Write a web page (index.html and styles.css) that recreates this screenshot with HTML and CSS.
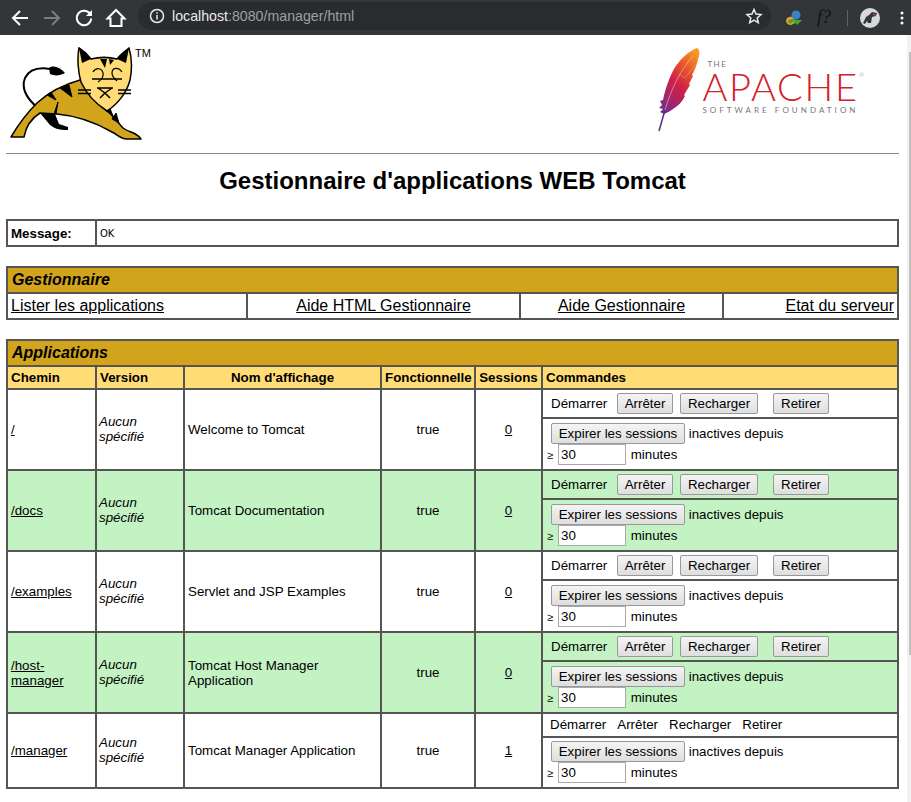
FILE: index.html
```html
<!DOCTYPE html>
<html lang="fr">
<head>
<meta charset="utf-8">
<title>/manager</title>
<link rel="stylesheet" href="styles.css">
</head>
<body>
<header class="chrome">
  <svg class="nav" width="24" height="24" viewBox="0 0 24 24"><path d="M20 12H5M12 5l-7 7 7 7" fill="none" stroke="#fff" stroke-width="2"/></svg>
  <svg class="nav" width="24" height="24" viewBox="0 0 24 24"><path d="M4 12h15M12 5l7 7-7 7" fill="none" stroke="#7b7e80" stroke-width="2"/></svg>
  <svg class="nav" width="24" height="24" viewBox="0 0 24 24"><path d="M18 8a7.200 7.200 0 1 0 1.200 4.500" fill="none" stroke="#fff" stroke-width="2"/><path d="M20 4v6h-6z" fill="#fff"/></svg>
  <svg class="nav" width="24" height="24" viewBox="0 0 24 24"><path d="M12 4L3.500 12.500H6.500V20H17.500V12.500H20.500Z" fill="none" stroke="#fff" stroke-width="2"/></svg>
  <div class="omnibox">
    <svg width="16" height="16" viewBox="0 0 16 16"><circle cx="8" cy="8" r="6.500" fill="none" stroke="#e8eaed" stroke-width="1.500"/><path d="M8 7v4.500M8 4.200v1.500" stroke="#e8eaed" stroke-width="1.500"/></svg>
    <span class="url"><span class="host">localhost</span>:8080/manager/html</span>
    <svg class="star" width="18" height="18" viewBox="0 0 18 18"><path d="M9 2.500l2 4.600 5 .5-3.800 3.300 1.100 4.900L9 13.200l-4.300 2.600 1.100-4.900L2 7.600l5-.5z" fill="none" stroke="#e8eaed" stroke-width="1.500"/></svg>
  </div>
  <svg class="ext" width="18" height="18" viewBox="0 0 18 18"><path d="M1 12c0-4 4-5 8-4l1 6-4 2c-3 0-5-2-5-4z" fill="#e0a030"/><path d="M3 12c2-2 5-2 7-1l-3 3c-2 1-4 0-4-2z" fill="#50a030"/><circle cx="11" cy="6" r="4.500" fill="#3f7fc4"/><path d="M8 11h9l-5 5z" fill="#3fae2a"/></svg>
  <span class="fq">f?</span>
  <span class="sep"></span>
  <svg class="avatar" width="20" height="20" viewBox="0 0 20 20"><circle cx="10" cy="10" r="10" fill="#d8d8dc"/><path d="M3 15l3-6 3-2 3-3 5 1-1 3-4 1-1 6H8l-1-2-2 3z" fill="#33363e"/><path d="M13 5l3 1v2l-3-1z" fill="#a83a3a"/></svg>
  <svg class="kebab" width="4" height="16" viewBox="0 0 4 16"><circle cx="2" cy="3" r="1.500" fill="#fff"/><circle cx="2" cy="8" r="1.500" fill="#fff"/><circle cx="2" cy="13" r="1.500" fill="#fff"/></svg>
</header>
<div class="viewport">
<main class="page">
  <div class="logos">
    <div class="tomcat">
      <svg width="134" height="94" viewBox="10 47 134 94">
        <path d="M38 108C26 98 21 88 25 78C29 70 38 67 50 69" fill="none" stroke="#000" stroke-width="2"/>
        <path d="M49 68C53 65 60 67 65 73C60 76 54 76 50 74Z" fill="#000"/>
        <path d="M40 113L50 125C54 128 58 130 68 130L68 127L59 124L55 114Z" fill="#000"/>
        <path d="M11 137C18 125 28 112 37 103C48 93 62 85 80 80L107 110L123 128C128 132 138 133 141 139H127C120 139 118 135 112 132C98 124 80 116 57 114L40 113C32 118 26 126 24 137Z" fill="#d2a41c" stroke="#000" stroke-width="1.500" stroke-linejoin="round"/>
        <path d="M60 88L72 97L69 85ZM47 95L56 100L51 92ZM58 102L56 114L54 114ZM105 110L113 116L109 106ZM112 119L119 123L116 113Z" fill="#000" stroke="#000" stroke-width="1"/>
        <path d="M79 48C84 51 88 55 91 59C99 57 109 57 117 59C120 55 125 51 129 48C132 58 132 70 130 80C127 92 118 104 107 111C96 104 86 93 81 82C78 72 77 58 79 48Z" fill="#ffdc75" stroke="#000" stroke-width="1.500"/>
        <path d="M79 48C84 51 88 55 91 59L82 63ZM129 48C125 51 120 55 117 59L126 63ZM100 59L105 68L107 59ZM109 59L110 65L114 60Z" fill="#000"/>
        <path d="M93 72C96 67 102 68 103 73C104 77 101 80 98 82M122 72C118 66 112 68 112 73C112 77 115 79 117 81" fill="none" stroke="#000" stroke-width="1.200"/>
        <path d="M92 79H122M97 88H113M105 93L98 88M105 93L112 88M105 93L100 98M105 93L110 98" fill="none" stroke="#000" stroke-width="1.500"/>
        <path d="M78 90H91M78 93.500H91M118 90H131M118 93.500H131" fill="none" stroke="#000" stroke-width="1.500"/>
      </svg>
      <span class="tm">TM</span>
    </div>
    <div class="apache">
      <svg class="feather" width="44" height="84" viewBox="0 0 44 84">
        <defs><linearGradient id="feather" x1="0.800" y1="0" x2="0.200" y2="1"><stop offset="0" stop-color="#f69923"/><stop offset="0.250" stop-color="#ea5b2a"/><stop offset="0.550" stop-color="#cf2047"/><stop offset="0.800" stop-color="#a9236b"/><stop offset="1" stop-color="#6d3090"/></linearGradient></defs>
        <path d="M40 0C42 1 43 4 42 8C40 16 38 22 35 27L36 28L32 36L33 37L27 47L28 48C25 54 21 58 16 61C12 64 9 65 7 66L3 64L6 61L2 60L5 57L3 53L6 52C8 42 12 30 17 21C23 11 32 3 40 0Z" fill="url(#feather)"/>
        <path d="M2 83L8 62" fill="none" stroke="#5e2a82" stroke-width="1.500"/>
        <path d="M8 62C14 42 22 24 36 8" fill="none" stroke="#f7c8a8" stroke-width=".6"/>
        <path d="M22 26L28 30L41 14" fill="none" stroke="#f7b080" stroke-width=".5"/>
      </svg>
      <div class="wordmark">
        <span class="the">THE</span>
        <span class="name">APACHE<sup class="reg">®</sup></span>
        <span class="asf">SOFTWARE FOUNDATION</span>
      </div>
    </div>
  </div>
  <hr class="rule">
  <h1 class="title">Gestionnaire d'applications WEB Tomcat</h1>

  <table class="grid message">
    <colgroup><col class="c-msg"><col></colgroup>
    <tr><td class="label">Message:</td><td class="mono">OK</td></tr>
  </table>

  <table class="grid links">
    <colgroup><col class="l1"><col class="l2"><col class="l3"><col></colgroup>
    <tr><th class="section" colspan="4">Gestionnaire</th></tr>
    <tr>
      <td class="big"><a href="#">Lister les applications</a></td>
      <td class="big center"><a href="#">Aide HTML Gestionnaire</a></td>
      <td class="big center"><a href="#">Aide Gestionnaire</a></td>
      <td class="big right"><a href="#">Etat du serveur</a></td>
    </tr>
  </table>

  <table class="grid apps">
    <colgroup><col class="a1"><col class="a2"><col class="a3"><col class="a4"><col class="a5"><col></colgroup>
    <tr><th class="section" colspan="6">Applications</th></tr>
    <tr class="heads">
      <th>Chemin</th><th>Version</th><th class="center">Nom d'affichage</th><th class="center">Fonctionnelle</th><th class="center">Sessions</th><th>Commandes</th>
    </tr>

    <tr class="row">
      <td rowspan="2"><a href="#">/</a></td><td rowspan="2" class="ver">Aucun spécifié</td><td rowspan="2">Welcome to Tomcat</td><td rowspan="2" class="center">true</td><td rowspan="2" class="center"><a href="#">0</a></td>
      <td class="cmd"><span class="start">Démarrer</span><button class="b-stop">Arrêter</button><button class="b-reload">Recharger</button><button class="b-undeploy">Retirer</button></td>
    </tr>
    <tr class="row"><td class="exp"><div class="exp-1"><button class="b-expire">Expirer les sessions</button> inactives depuis</div><div class="exp-2"><span class="ge">≥</span><input class="mins" value="30"> minutes</div></td></tr>

    <tr class="row alt">
      <td rowspan="2"><a href="#">/docs</a></td><td rowspan="2" class="ver">Aucun spécifié</td><td rowspan="2">Tomcat Documentation</td><td rowspan="2" class="center">true</td><td rowspan="2" class="center"><a href="#">0</a></td>
      <td class="cmd"><span class="start">Démarrer</span><button class="b-stop">Arrêter</button><button class="b-reload">Recharger</button><button class="b-undeploy">Retirer</button></td>
    </tr>
    <tr class="row alt"><td class="exp"><div class="exp-1"><button class="b-expire">Expirer les sessions</button> inactives depuis</div><div class="exp-2"><span class="ge">≥</span><input class="mins" value="30"> minutes</div></td></tr>

    <tr class="row">
      <td rowspan="2"><a href="#">/examples</a></td><td rowspan="2" class="ver">Aucun spécifié</td><td rowspan="2">Servlet and JSP Examples</td><td rowspan="2" class="center">true</td><td rowspan="2" class="center"><a href="#">0</a></td>
      <td class="cmd"><span class="start">Démarrer</span><button class="b-stop">Arrêter</button><button class="b-reload">Recharger</button><button class="b-undeploy">Retirer</button></td>
    </tr>
    <tr class="row"><td class="exp"><div class="exp-1"><button class="b-expire">Expirer les sessions</button> inactives depuis</div><div class="exp-2"><span class="ge">≥</span><input class="mins" value="30"> minutes</div></td></tr>

    <tr class="row alt">
      <td rowspan="2"><a href="#">/host-manager</a></td><td rowspan="2" class="ver">Aucun spécifié</td><td rowspan="2">Tomcat Host Manager Application</td><td rowspan="2" class="center">true</td><td rowspan="2" class="center"><a href="#">0</a></td>
      <td class="cmd"><span class="start">Démarrer</span><button class="b-stop">Arrêter</button><button class="b-reload">Recharger</button><button class="b-undeploy">Retirer</button></td>
    </tr>
    <tr class="row alt"><td class="exp"><div class="exp-1"><button class="b-expire">Expirer les sessions</button> inactives depuis</div><div class="exp-2"><span class="ge">≥</span><input class="mins" value="30"> minutes</div></td></tr>

    <tr class="row last">
      <td rowspan="2"><a href="#">/manager</a></td><td rowspan="2" class="ver">Aucun spécifié</td><td rowspan="2">Tomcat Manager Application</td><td rowspan="2" class="center">true</td><td rowspan="2" class="center"><a href="#">1</a></td>
      <td class="cmd plain"><span>Démarrer</span><span>Arrêter</span><span>Recharger</span><span>Retirer</span></td>
    </tr>
    <tr class="row end"><td class="exp"><div class="exp-1"><button class="b-expire">Expirer les sessions</button> inactives depuis</div><div class="exp-2"><span class="ge">≥</span><input class="mins" value="30"> minutes</div></td></tr>
  </table>
</main>
<div class="scrollbar"><div class="thumb"></div></div>
</div>
</body>
</html>
```
FILE: styles.css
```css
* { box-sizing: border-box; }
html, body { margin: 0; height: 100%; overflow: hidden; }
body { font-family: "Liberation Sans", Arial, sans-serif; color: #000; background: #fff; }

.chrome { height: 35px; background: #323639; display: flex; align-items: center; padding-left: 8px; }
.nav { margin-right: 8px; flex: none; }
.omnibox { margin-left: 2px; width: 633px; height: 28px; border-radius: 14px; background: #292b2e; display: flex; align-items: center; padding-left: 11px; padding-right: 8px; margin-top: -3px; }
.url { margin-left: 7px; font-size: 14.2px; color: #9aa0a6; }
.host { color: #e8eaed; }
.star { margin-left: auto; }
.ext { margin-left: 14px; flex: none; }
.fq { margin-left: 14px; width: 18px; font: italic 18px "Liberation Serif", serif; color: #111; }
.sep { width: 1px; height: 16px; background: #5f6368; margin-left: 12px; }
.avatar { margin-left: 12px; }
.kebab { margin-left: 20px; }

.viewport { position: relative; height: 767px; overflow: hidden; }
.page { padding: 0 12px 0 6px; }
.scrollbar { position: absolute; top: 0; right: 0; bottom: 0; width: 4px; background: #f1f1f1; }
.thumb { width: 2px; height: 603px; margin: 17px 0 0 2px; background: #c1c1c1; }

.logos { height: 118px; display: flex; justify-content: space-between; }
.tomcat { display: flex; align-items: flex-start; padding: 12px 0 0 4px; }
.tm { font-size: 11px; line-height: 11px; margin: 1px 0 0 -9px; }
.apache { display: flex; align-items: flex-start; padding: 13px 35px 0 0; }
.feather { flex: none; }
.wordmark { display: flex; flex-direction: column; margin-left: 1px; margin-top: 11px; color: #d22128; }
.the { font: 400 8px/10px Lato, sans-serif; letter-spacing: 1.500px; color: #777; margin-left: 5px; }
.name { font: 300 38px/32px Lato, sans-serif; letter-spacing: 1.800px; margin-top: 1px; white-space: nowrap; }
.reg { font-size: 6px; color: #777; vertical-align: 24px; line-height: 0; letter-spacing: 0; }
.asf { font: 400 8px/10px Lato, sans-serif; letter-spacing: 3.050px; color: #777; margin-top: 3px; white-space: nowrap; }

.rule { margin: 0; border: 0; border-top: 1px solid #888; height: 1px; }
.title { margin: 13px 0 24px; font-size: 24px; line-height: 28px; text-align: center; font-weight: 700; }

.grid { width: 893px; table-layout: fixed; border-collapse: collapse; border: 2px solid #555; background: #fff; margin-bottom: 19px; }
.grid td, .grid th { border: 2px solid #555; padding: 0 3px; font-size: 13.33px; text-align: left; font-weight: 400; }
.grid a { color: #000; }
.center.center { text-align: center; }
.right.right { text-align: right; }

.c-msg { width: 89px; }
.message td { height: 26px; }
.label.label { font-weight: 700; padding-left: 3px; }
.grid .mono { font-family: "DejaVu Sans", sans-serif; font-size: 10px; }

.section.section { background: #d2a41c; font-size: 16px; font-style: italic; font-weight: 700; height: 26px; padding-left: 4px; }
.l1 { width: 240px; }
.l2 { width: 273px; }
.l3 { width: 203px; }
.big.big { font-size: 16px; height: 26px; }

.a1 { width: 89px; }
.a2 { width: 88px; }
.a3 { width: 197px; }
.a4 { width: 94px; }
.a5 { width: 67px; }
.heads th { background: #ffdc75; font-weight: 700; height: 23px; }
.row td { height: 29px; }
.row .exp { height: 52px; padding: 4px 0 0 4px; vertical-align: top; }
.row.end .exp { height: 51px; padding-top: 3px; }
.alt td { background: #c3f3c3; }
.row.last .cmd { height: 24px; padding-bottom: 2px; }
.cmd.cmd { padding-left: 8px; white-space: nowrap; }
.grid .ver { font-style: italic; padding: 0 2px 1px; }
.start { display: inline-block; width: 66px; }

button { font: 13.33px "Liberation Sans", Arial, sans-serif; height: 21px; padding: 0; border: 1px solid #999; border-radius: 2px; background: linear-gradient(#f4f4f4, #dedede); color: #000; }
.b-stop { width: 56px; margin-right: 7px; }
.b-reload { width: 78px; margin-right: 15px; }
.b-undeploy { width: 56px; }
.b-expire { width: 134px; margin-left: 4px; }
.exp-1, .exp-2 { height: 21px; }
.ge { font-size: 11px; display: inline-block; width: 11px; }
.mins { width: 68px; height: 21px; border: 1px solid #aaa; font: 13.33px "Liberation Sans", Arial, sans-serif; padding: 0 2px; margin-right: 1px; background: #fff; }
.plain.plain { padding-left: 7px; }
.plain span { margin-right: 11px; }
```
